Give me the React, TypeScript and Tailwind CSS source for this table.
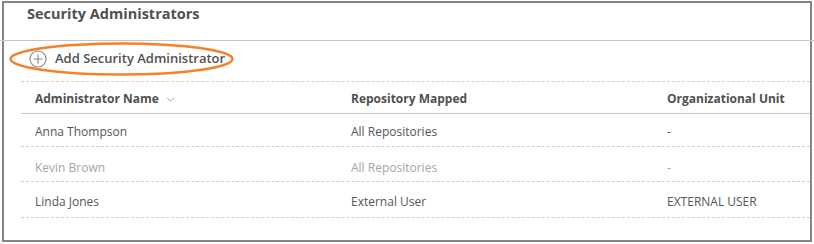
import { ChevronDown } from "lucide-react";

type Admin = {
  name: string;
  repository: string;
  unit: string;
  disabled?: boolean;
};

const admins: Admin[] = [
  { name: "Anna Thompson", repository: "All Repositories", unit: "-" },
  { name: "Kevin Brown", repository: "All Repositories", unit: "-", disabled: true },
  { name: "Linda Jones", repository: "External User", unit: "EXTERNAL USER" },
];

const rowSizes = ["h-[33px] pt-[4px]", "h-[35px] pt-[7px]", "h-[36px] pt-[4px]"];

function PlusCircle() {
  return (
    <svg width="18" height="18" viewBox="0 0 18 18" fill="none">
      <circle cx="9" cy="9" r="8" stroke="#8c8c8c" strokeWidth="1.2" />
      <path d="M9 4.5v9M4.5 9h9" stroke="#8c8c8c" strokeWidth="1.2" />
    </svg>
  );
}

export default function App() {
  return (
    <div
      className="relative h-[244px] w-[814px] overflow-hidden bg-white"
      style={{ fontFamily: '"Open Sans", "Liberation Sans", sans-serif' }}
    >
      <div className="ml-[2px] mt-[1px] flex h-[241px] w-[810px] flex-col border-2 border-[#858585]">
        <div className="h-[37px] pl-[23px] pt-[1px] text-[14.5px] leading-[20px] font-bold text-[#505050]">
          Security Administrators
        </div>
        <div className="-mx-[4px] h-px bg-[#c6c6c6]" />

        <div className="ml-[17px] flex flex-col">
          <div className="flex h-[41px] items-center gap-[8px] border-b border-dashed border-[#cfcfcf] pb-[4px] pl-[8px]">
            <PlusCircle />
            <span className="text-[13px] font-semibold text-[#505050]">
              Add Security Administrator
            </span>
          </div>

          <div className="grid h-[32px] grid-cols-[316px_316px_1fr] items-center border-b border-[#c6c6c6] pl-[14px] pt-[3px] text-[12px] font-bold text-[#505050]">
            <div className="flex items-center gap-[5px]">
              Administrator Name
              <ChevronDown className="h-[13px] w-[13px] text-[#8c8c8c]" strokeWidth={1.5} />
            </div>
            <div>Repository Mapped</div>
            <div>Organizational Unit</div>
          </div>

          {admins.map((admin, i) => (
            <div
              key={admin.name}
              className={`grid grid-cols-[316px_316px_1fr] items-center border-b border-dashed border-[#cfcfcf] pl-[14px] text-[12px] ${
                rowSizes[i]
              } ${admin.disabled ? "text-[#a6a6a6]" : "text-[#555555]"}`}
            >
              <div>{admin.name}</div>
              <div>{admin.repository}</div>
              <div>{admin.unit}</div>
            </div>
          ))}
        </div>
      </div>

      {/* highlight ring around the add action */}
      <svg className="pointer-events-none absolute left-0 top-0" width="814" height="244">
        <ellipse cx="121.5" cy="59" rx="111" ry="15.5" fill="none" stroke="#f5822a" strokeWidth="2.5" />
      </svg>
    </div>
  );
}
